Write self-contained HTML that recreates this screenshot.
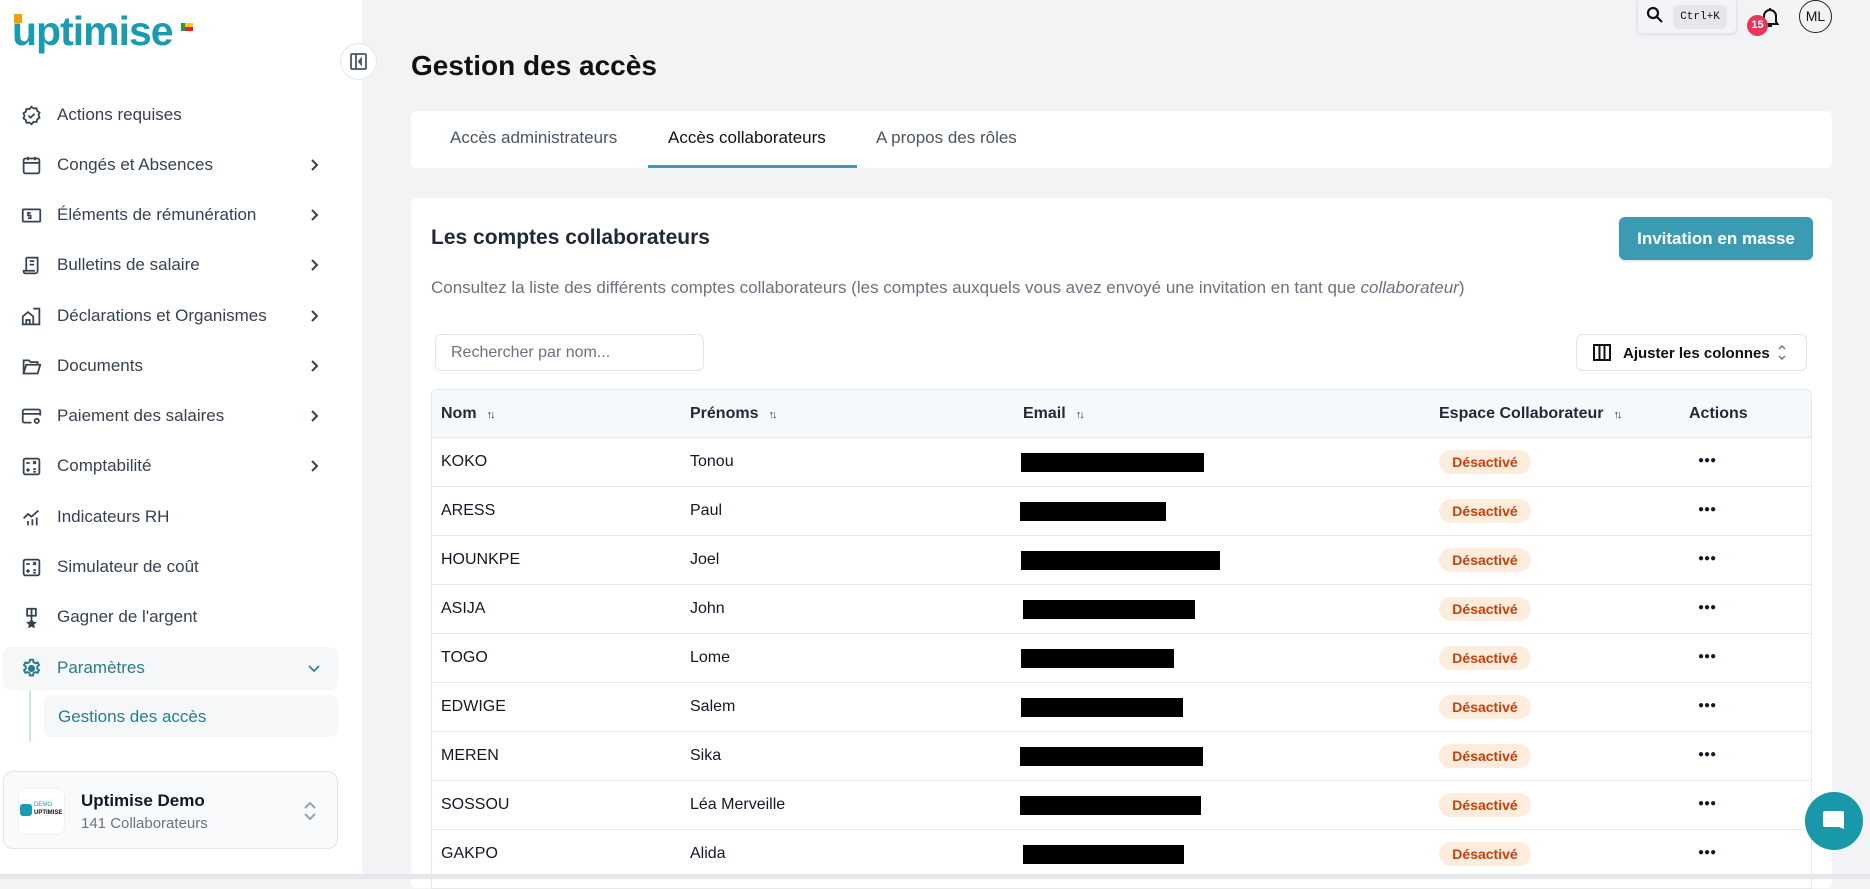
<!DOCTYPE html>
<html><head><meta charset="utf-8">
<style>
*{box-sizing:border-box;margin:0;padding:0}
body{width:1870px;height:879px;overflow:hidden;background:#f2f3f5;font-family:"Liberation Sans",Arial,sans-serif;color:#111827;position:relative}
.abs{position:absolute}
#side{left:0;top:0;width:362px;height:879px;background:#fff}
.nav{position:absolute;left:0;width:340px;height:40px;display:flex;align-items:center;font-size:17px;color:#374151}
.nav svg{position:absolute;left:21px;width:21px;height:21px}
.nav span{position:absolute;left:57px}
.nav .chev{position:absolute;left:307px;width:14px;height:14px}
.tab{position:absolute;top:128px;font-size:17px;color:#4b5563}
.th{position:absolute;font-size:16px;font-weight:bold;color:#1f2937;top:405px}
.th i{font-style:normal;font-size:11px;margin-left:10px;letter-spacing:-2px}
.row{position:absolute;left:431px;width:1381px;height:49px;border-top:1px solid #e5e7eb;font-size:16px}
.row .n{position:absolute;left:10px;top:15px}
.row .p{position:absolute;left:259px;top:15px}
.row .bar{position:absolute;top:15px;height:19px;background:#000}
.row .badge{position:absolute;left:1008px;top:12px;width:92px;height:24px;border-radius:12px;background:#feecdc;color:#c2410c;font-size:14px;font-weight:bold;text-align:center;line-height:24px}
.row .dots{position:absolute;left:1267px;top:17px;font-size:10px;letter-spacing:0px}
</style></head><body>
<div id="side" class="abs">
  <div class="abs" style="left:12px;top:8px;font-size:41px;font-weight:bold;color:#1a9bb0;letter-spacing:-1px">uptimise</div>
  <div class="abs" style="left:14px;top:14px;width:8px;height:9px;background:#f59e0b"></div>
  <div class="abs" style="left:181px;top:23px;width:4px;height:8px;background:#16a34a"></div>
  <div class="abs" style="left:185px;top:23px;width:8px;height:4px;background:#facc15"></div>
  <div class="abs" style="left:185px;top:27px;width:8px;height:4px;background:#e11d48"></div>
  <div class="abs" style="left:340px;top:43px;width:37px;height:37px;border-radius:50%;background:#fff;border:1px solid #e5e7eb;z-index:2"></div>
  <svg class="abs" style="left:350px;top:53px;z-index:3" width="17" height="17" viewBox="0 0 17 17" fill="none" stroke="#4b5563" stroke-width="1.8"><rect x="1" y="1" width="15" height="15" rx="1"/><line x1="6" y1="1" x2="6" y2="16"/><path d="M11 6l-2 2.5 2 2.5z" fill="#4b5563"/></svg>

  <div class="nav" style="top:95px"><svg viewBox="0 0 24 24" fill="none" stroke="#374151" stroke-width="2"><path d="M12 2l2.5 2 3.2-.3.8 3.1 2.7 1.8-1.2 3 1.2 3-2.7 1.8-.8 3.1-3.2-.3L12 22l-2.5-2-3.2.3-.8-3.1-2.7-1.8 1.2-3-1.2-3 2.7-1.8.8-3.1 3.2.3z"/><path d="M8.5 12l2.5 2.5 4.5-4.5"/></svg><span>Actions requises</span></div>
  <div class="nav" style="top:145px"><svg viewBox="0 0 24 24" fill="none" stroke="#374151" stroke-width="2"><rect x="3" y="4" width="18" height="17" rx="2"/><path d="M3 9h18M8 2v4M16 2v4"/><path d="M8 13h.01M12 13h.01M16 13h.01M8 17h.01M12 17h.01M16 17h.01"/></svg><span>Congés et Absences</span><svg class="chev" viewBox="0 0 14 14" fill="none" stroke="#374151" stroke-width="2"><path d="M5 2l5 5-5 5"/></svg></div>
  <div class="nav" style="top:195px"><svg viewBox="0 0 24 24" fill="none" stroke="#374151" stroke-width="2"><rect x="2" y="5" width="20" height="14" rx="1"/><path d="M11 9H8v3h3v3H8M17 10h.01M17 14h.01"/></svg><span>Éléments de rémunération</span><svg class="chev" viewBox="0 0 14 14" fill="none" stroke="#374151" stroke-width="2"><path d="M5 2l5 5-5 5"/></svg></div>
  <div class="nav" style="top:245px"><svg viewBox="0 0 24 24" fill="none" stroke="#374151" stroke-width="2"><path d="M6 3h13v15a3 3 0 01-3 3H5a2 2 0 01-2-2v-1h13"/><path d="M10 7h5M10 11h5M6 3v15"/></svg><span>Bulletins de salaire</span><svg class="chev" viewBox="0 0 14 14" fill="none" stroke="#374151" stroke-width="2"><path d="M5 2l5 5-5 5"/></svg></div>
  <div class="nav" style="top:296px"><svg viewBox="0 0 24 24" fill="none" stroke="#374151" stroke-width="2"><path d="M2 21V12l6-5 6 5v9H2z M6 21v-5h4v5"/><path d="M14 3h7v18h-7M18 8h.01M18 12h.01M18 16h.01"/></svg><span>Déclarations et Organismes</span><svg class="chev" viewBox="0 0 14 14" fill="none" stroke="#374151" stroke-width="2"><path d="M5 2l5 5-5 5"/></svg></div>
  <div class="nav" style="top:346px"><svg viewBox="0 0 24 24" fill="none" stroke="#374151" stroke-width="2"><path d="M3 20V5h6l2 2h8v3"/><path d="M3 20l3-10h16l-3 10z"/></svg><span>Documents</span><svg class="chev" viewBox="0 0 14 14" fill="none" stroke="#374151" stroke-width="2"><path d="M5 2l5 5-5 5"/></svg></div>
  <div class="nav" style="top:396px"><svg viewBox="0 0 24 24" fill="none" stroke="#374151" stroke-width="2"><path d="M12 19H4a2 2 0 01-2-2V6a2 2 0 012-2h16a2 2 0 012 2v5M2 9h20"/><circle cx="18" cy="17" r="2.5"/></svg><span>Paiement des salaires</span><svg class="chev" viewBox="0 0 14 14" fill="none" stroke="#374151" stroke-width="2"><path d="M5 2l5 5-5 5"/></svg></div>
  <div class="nav" style="top:446px"><svg viewBox="0 0 24 24" fill="none" stroke="#374151" stroke-width="2"><rect x="3" y="3" width="18" height="18" rx="2"/><path d="M6 8h4M14 6l3 3M17 6l-3 3M6 16h4M8 14v4M14 15h3M14 18h3"/></svg><span>Comptabilité</span><svg class="chev" viewBox="0 0 14 14" fill="none" stroke="#374151" stroke-width="2"><path d="M5 2l5 5-5 5"/></svg></div>
  <div class="nav" style="top:497px"><svg viewBox="0 0 24 24" fill="none" stroke="#374151" stroke-width="2"><path d="M3 21h.01M8 21v-5M13 21v-7M18 21v-9M3 13l5-5 4 3 8-7"/></svg><span>Indicateurs RH</span></div>
  <div class="nav" style="top:547px"><svg viewBox="0 0 24 24" fill="none" stroke="#374151" stroke-width="2"><rect x="3" y="3" width="18" height="18" rx="2"/><path d="M6 8h4M14 6l3 3M17 6l-3 3M6 16h4M8 14v4M14 15h3M14 18h3"/></svg><span>Simulateur de coût</span></div>
  <div class="nav" style="top:597px"><svg viewBox="0 0 24 24" fill="none" stroke="#374151" stroke-width="2"><path d="M7 2h10v8H7zM12 2v8M12 10v4"/><path d="M12 15l1.3 2.6 2.7.4-2 1.9.5 2.7-2.5-1.3-2.5 1.3.5-2.7-2-1.9 2.7-.4z" fill="#374151"/></svg><span>Gagner de l'argent</span></div>
  <div class="abs" style="left:3px;top:647px;width:335px;height:43px;background:#f5f7f9;border-radius:8px"></div>
  <div class="nav" style="top:648px;color:#2a7c8c"><svg viewBox="0 0 24 24" fill="none" stroke="#2a7c8c" stroke-width="2.2"><path d="M10.3 2h3.4l.5 2.6 2.2 1.3 2.5-.9 1.7 3-2 1.7v2.6l2 1.7-1.7 3-2.5-.9-2.2 1.3-.5 2.6h-3.4l-.5-2.6-2.2-1.3-2.5.9-1.7-3 2-1.7v-2.6l-2-1.7 1.7-3 2.5.9 2.2-1.3z"/><circle cx="12" cy="12" r="3" fill="#2a7c8c"/></svg><span>Paramètres</span><svg class="chev" viewBox="0 0 14 14" fill="none" stroke="#2a7c8c" stroke-width="1.6"><path d="M2 5l5 5 5-5"/></svg></div>
  <div class="abs" style="left:29px;top:690px;width:2px;height:52px;background:#cfe3ea"></div>
  <div class="abs" style="left:44px;top:695px;width:294px;height:42px;background:#f5f7f9;border-radius:8px;color:#2a7c8c;font-size:17px;padding:12px 0 0 14px">Gestions des accès</div>
  <div class="abs" style="left:3px;top:771px;width:335px;height:78px;background:#f8fafc;border:1px solid #e2e5e9;border-radius:10px"></div>
  <div class="abs" style="left:18px;top:788px;width:47px;height:47px;background:#fff;border:1px solid #eef0f2;border-radius:8px"></div>
  <div class="abs" style="left:20px;top:804px;width:12px;height:12px;border-radius:3px;background:#1a9bb0"></div>
  <div class="abs" style="left:34px;top:802px;font-size:6px;color:#1a9bb0">DEMO</div>
  <div class="abs" style="left:34px;top:810px;font-size:6px;font-weight:bold;color:#111">UPTIMISE</div>
  <div class="abs" style="left:81px;top:791px;font-size:17px;font-weight:bold;color:#111827">Uptimise Demo</div>
  <div class="abs" style="left:81px;top:815px;font-size:15px;color:#6b7280">141 Collaborateurs</div>
  <svg class="abs" style="left:302px;top:800px" width="16" height="22" viewBox="0 0 16 22" fill="none" stroke="#9ca3af" stroke-width="2"><path d="M3 8l5-5 5 5M3 14l5 5 5-5"/></svg>
</div>

<div class="abs" style="left:411px;top:50px;font-size:28px;font-weight:bold;color:#111">Gestion des accès</div>

<div class="abs" style="left:1637px;top:-4px;width:100px;height:38px;background:#f2f4f7;border:1px solid #e1e6ec;border-radius:6px;box-shadow:0 1px 3px rgba(0,0,0,.08)"></div>
<svg class="abs" style="left:1646px;top:6px" width="18" height="18" viewBox="0 0 18 18" fill="none" stroke="#111" stroke-width="2.2"><circle cx="7" cy="7" r="5"/><path d="M11 11l5 5"/></svg>
<div class="abs" style="left:1673px;top:5px;width:54px;height:24px;background:#e5e7eb;border-radius:5px;font-family:'Liberation Mono',monospace;font-size:11px;text-align:center;line-height:24px;color:#111">Ctrl+K</div>
<svg class="abs" style="left:1761px;top:6px" width="18" height="22" viewBox="0 0 18 22" fill="none" stroke="#111" stroke-width="2"><path d="M3 16V10a6 6 0 0112 0v6l1.5 2h-15zM7 20h4M9 2v2"/></svg>
<div class="abs" style="left:1747px;top:15px;width:21px;height:21px;border-radius:50%;background:#e8365a;color:#fff;font-size:11px;font-weight:bold;text-align:center;line-height:21px">15</div>
<div class="abs" style="left:1799px;top:0px;width:33px;height:33px;border-radius:50%;border:1.5px solid #222;font-size:14px;text-align:center;line-height:30px;color:#111">ML</div>

<div class="abs" style="left:411px;top:111px;width:1421px;height:57px;background:#fff;border-radius:6px"></div>
<div class="tab" style="left:450px">Accès administrateurs</div>
<div class="tab" style="left:668px;color:#111">Accès collaborateurs</div>
<div class="tab" style="left:876px">A propos des rôles</div>
<div class="abs" style="left:648px;top:165px;width:209px;height:3px;background:#3a9bb3"></div>

<div class="abs" style="left:411px;top:198px;width:1421px;height:690px;background:#fff;border-radius:6px"></div>
<div class="abs" style="left:431px;top:226px;font-size:21px;font-weight:bold;color:#1f2937">Les comptes collaborateurs</div>
<div class="abs" style="left:431px;top:278px;font-size:17px;color:#6b7280">Consultez la liste des différents comptes collaborateurs (les comptes auxquels vous avez envoyé une invitation en tant que <i>collaborateur</i>)</div>
<div class="abs" style="left:1619px;top:217px;width:194px;height:43px;background:#3a9bb3;border-radius:6px;color:#fff;font-size:17px;font-weight:bold;text-align:center;line-height:43px;box-shadow:0 1px 2px rgba(0,0,0,.15)">Invitation en masse</div>
<div class="abs" style="left:435px;top:334px;width:269px;height:37px;border:1px solid #e2e5e9;border-radius:6px;font-size:16px;color:#6b7280;padding:9px 0 0 15px">Rechercher par nom...</div>
<div class="abs" style="left:1576px;top:334px;width:231px;height:37px;border:1px solid #e2e5e9;border-radius:6px;font-size:15px;font-weight:bold;color:#111;padding:10px 0 0 46px">Ajuster les colonnes</div>
<svg class="abs" style="left:1593px;top:344px" width="18" height="17" viewBox="0 0 18 17" fill="none" stroke="#111" stroke-width="2"><rect x="1" y="1" width="16" height="15"/><path d="M6.5 1v15M11.5 1v15"/></svg>
<svg class="abs" style="left:1777px;top:344px" width="10" height="17" viewBox="0 0 10 17" fill="none" stroke="#6b7280" stroke-width="1.4"><path d="M2 5l3-3 3 3M2 12l3 3 3-3"/></svg>

<div class="abs" style="left:431px;top:389px;width:1381px;height:500px;border:1px solid #e5e7eb;border-radius:6px 6px 0 0"></div>
<div class="abs" style="left:432px;top:390px;width:1379px;height:47px;background:#f6f9fc;border-radius:6px 6px 0 0"></div>
<div class="th" style="left:441px">Nom<i>↑↓</i></div>
<div class="th" style="left:690px">Prénoms<i>↑↓</i></div>
<div class="th" style="left:1023px">Email<i>↑↓</i></div>
<div class="th" style="left:1439px">Espace Collaborateur<i>↑↓</i></div>
<div class="th" style="left:1689px">Actions</div>

<div class="row" style="top:437px"><div class="n">KOKO</div><div class="p">Tonou</div><div class="bar" style="left:590px;width:183px"></div><div class="badge">Désactivé</div><div class="dots">●●●</div></div>
<div class="row" style="top:486px"><div class="n">ARESS</div><div class="p">Paul</div><div class="bar" style="left:589px;width:146px"></div><div class="badge">Désactivé</div><div class="dots">●●●</div></div>
<div class="row" style="top:535px"><div class="n">HOUNKPE</div><div class="p">Joel</div><div class="bar" style="left:590px;width:199px"></div><div class="badge">Désactivé</div><div class="dots">●●●</div></div>
<div class="row" style="top:584px"><div class="n">ASIJA</div><div class="p">John</div><div class="bar" style="left:592px;width:172px"></div><div class="badge">Désactivé</div><div class="dots">●●●</div></div>
<div class="row" style="top:633px"><div class="n">TOGO</div><div class="p">Lome</div><div class="bar" style="left:590px;width:153px"></div><div class="badge">Désactivé</div><div class="dots">●●●</div></div>
<div class="row" style="top:682px"><div class="n">EDWIGE</div><div class="p">Salem</div><div class="bar" style="left:590px;width:162px"></div><div class="badge">Désactivé</div><div class="dots">●●●</div></div>
<div class="row" style="top:731px"><div class="n">MEREN</div><div class="p">Sika</div><div class="bar" style="left:589px;width:183px"></div><div class="badge">Désactivé</div><div class="dots">●●●</div></div>
<div class="row" style="top:780px"><div class="n">SOSSOU</div><div class="p">Léa Merveille</div><div class="bar" style="left:589px;width:181px"></div><div class="badge">Désactivé</div><div class="dots">●●●</div></div>
<div class="row" style="top:829px"><div class="n">GAKPO</div><div class="p">Alida</div><div class="bar" style="left:592px;width:161px"></div><div class="badge">Désactivé</div><div class="dots">●●●</div></div>

<div class="abs" style="left:0;top:874px;width:1870px;height:5px;background:#e5e7eb"></div>

<div class="abs" style="left:1805px;top:792px;width:58px;height:58px;border-radius:50%;background:#1898a8"></div>
<svg class="abs" style="left:1820px;top:808px" width="28" height="28" viewBox="0 0 28 28"><path d="M5 3h17a2 2 0 012 2v16l-5-2H5a2 2 0 01-2-2V5a2 2 0 012-2z" fill="#fff"/></svg>
</body></html>
